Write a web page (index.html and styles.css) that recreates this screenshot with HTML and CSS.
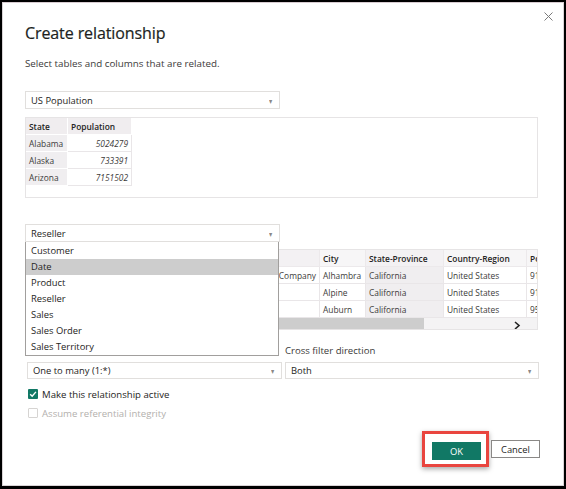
FILE: index.html
```html
<!DOCTYPE html>
<html>
<head>
<meta charset="utf-8">
<link rel="stylesheet" href="styles.css">
</head>
<body>
<div class="dialog">
  <button class="close" aria-label="Close">
    <svg width="9" height="9" viewBox="0 0 9 9"><path d="M0.5 0.5L8.5 8.5M8.5 0.5L0.5 8.5" stroke="#7a7a7a" stroke-width="1" fill="none"/></svg>
  </button>
  <h1 class="title">Create relationship</h1>
  <p class="subtitle">Select tables and columns that are related.</p>

  <div class="select wide">
    <span>US Population</span><span class="arrow">▾</span>
  </div>
  <div class="preview">
    <table class="grid small">
      <colgroup><col style="width:42px"><col style="width:64px"></colgroup>
      <thead><tr><th class="sel">State</th><th>Population</th></tr></thead>
      <tbody>
        <tr><td class="sel">Alabama</td><td class="num">5024279</td></tr>
        <tr><td class="sel">Alaska</td><td class="num">733391</td></tr>
        <tr><td class="sel">Arizona</td><td class="num">7151502</td></tr>
      </tbody>
    </table>
  </div>

  <div class="select-wrap">
    <div class="select wide open">
      <span>Reseller</span><span class="arrow">▾</span>
    </div>
    <ul class="menu">
      <li>Customer</li>
      <li class="hover">Date</li>
      <li>Product</li>
      <li>Reseller</li>
      <li>Sales</li>
      <li>Sales Order</li>
      <li>Sales Territory</li>
    </ul>
  </div>
  <div class="preview second">
    <table class="grid big">
      <colgroup><col style="width:110px"><col style="width:184px"><col style="width:46px"><col style="width:78px"><col style="width:83px"><col style="width:70px"></colgroup>
      <thead><tr><th>Business Type</th><th>Reseller</th><th class="light">City</th><th>State-Province</th><th class="light">Country-Region</th><th class="light">Postal Code</th></tr></thead>
      <tbody>
        <tr><td>Specialty Bike Shop</td><td class="rt">Sports Company</td><td>Alhambra</td><td class="sel">California</td><td>United States</td><td>91801</td></tr>
        <tr><td>Warehouse</td><td></td><td>Alpine</td><td class="sel">California</td><td>United States</td><td>91901</td></tr>
        <tr><td>Value Added Reseller</td><td></td><td>Auburn</td><td class="sel">California</td><td>United States</td><td>95603</td></tr>
      </tbody>
    </table>
    <div class="hscroll"><div class="thumb"></div><span class="chev">
      <svg width="8" height="9" viewBox="0 0 8 9"><path d="M2 1L6 4.5L2 8" stroke="#222" stroke-width="1.6" fill="none"/></svg>
    </span></div>
  </div>

  <div class="options">
    <div class="field">
      <label class="lbl">Cardinality</label>
      <div class="select"><span>One to many (1:*)</span><span class="arrow">▾</span></div>
    </div>
    <div class="field">
      <label class="lbl">Cross filter direction</label>
      <div class="select"><span>Both</span><span class="arrow">▾</span></div>
    </div>
  </div>

  <div class="checks">
    <div class="check on"><span class="box"><svg width="10" height="10" viewBox="0 0 10 10"><path d="M2.2 5.2L4.2 7.2L7.9 2.9" stroke="#fff" stroke-width="1.4" fill="none"/></svg></span>Make this relationship active</div>
    <div class="check off"><span class="box"></span>Assume referential integrity</div>
  </div>

  <div class="actions">
    <div class="highlight"><button class="btn primary">OK</button></div>
    <button class="btn">Cancel</button>
  </div>
</div>
</body>
</html>
```

FILE: styles.css
```css
* { box-sizing: border-box; }
html, body { margin: 0; padding: 0; }
body {
  background: #000;
  width: 566px;
  height: 489px;
  overflow: hidden;
  font-family: "Open Sans", "Noto Sans", sans-serif;
  color: #252423;
}
.dialog {
  position: relative;
  margin: 2px 0 0 2px;
  width: 562px;
  height: 484px;
  background: #fff;
  border: 1px solid #d9d4d6;
  border-top-color: #d8ccd1;
  padding: 0 0 0 22px;
}
.close {
  position: absolute;
  right: 10px;
  top: 9px;
  border: 0;
  background: none;
  padding: 0;
  width: 9px;
  height: 9px;
  display: block;
}
.close svg { display: block; }
.title {
  margin: 0;
  padding-top: 18px;
  font-size: 16px;
  line-height: 24px;
  font-weight: 400;
  color: #201f1e;
  letter-spacing: -0.1px;
  -webkit-text-stroke: 0.2px #201f1e;
}
.subtitle {
  margin: 12px 0 0;
  font-size: 9.8px;
  line-height: 14px;
  color: #3b3a39;
}
.select {
  height: 18px;
  border: 1px solid #e1dfdd;
  display: flex;
  align-items: center;
  justify-content: space-between;
  padding: 0 6px 0 5px;
  font-size: 9.4px;
  color: #252423;
  background: #fff;
}
.select .arrow {
  font-size: 8px;
  color: #8a8886;
  transform: scaleX(0.8);
}
.select.wide { width: 255px; margin-top: 20px; }
.preview {
  margin-top: 8px;
  width: 513px;
  height: 81px;
  border: 1px solid #e6e4e5;
  overflow: hidden;
  position: relative;
}
.preview.second { margin-top: 7px; }
.select-wrap { position: relative; width: 255px; margin-top: 26px; z-index: 5; }
.select-wrap .select.wide { margin-top: 0; }
.menu {
  position: absolute;
  left: 0;
  top: 18px;
  width: 254px;
  margin: 0;
  padding: 1px 0 0;
  list-style: none;
  background: #fff;
  border: 1px solid #a19f9d;
  border-top: 0;
  font-size: 9.4px;
}
.menu li {
  height: 16px;
  line-height: 16px;
  padding-left: 5px;
  color: #252423;
}
.menu li.hover { background: #cdcdcd; }
.grid {
  border-collapse: collapse;
  table-layout: fixed;
  font-size: 8.4px;
  color: #3b3a39;
}
.grid th, .grid td {
  height: 17px;
  padding: 0 3px;
  border: 1px solid #e9e6e8;
  white-space: nowrap;
  overflow: hidden;
  text-align: left;
}
.grid th {
  font-weight: 600;
  background: #f0edef;
  color: #252423;
  border-color: #fff;
}
.grid.small { margin: -1px 0 0 -1px; }
.grid.small td.sel { background: #f0eef0; border-color: #fff; }
.grid td.num { text-align: right; font-style: italic; }
.grid.big { margin: -1px 0 0 -1px; width: 571px; }
.grid.big th { background: #f3f1f3; border-color: #ece9eb; }
.grid.big th.light { background: #f7f6f7; }
.grid.big td { background: #fff; }
.grid.big td.sel { background: #f0eef0; }
.grid.big td.rt { text-align: right; }
.hscroll {
  height: 14px;
  background: #f4f3f4;
  position: relative;
}
.hscroll .thumb {
  width: 398px;
  height: 14px;
  background: #cdcdcd;
}
.hscroll .chev {
  position: absolute;
  left: 487px;
  top: 3px;
}
.hscroll .chev svg { display: block; }
.options {
  display: flex;
  gap: 3px;
  margin-top: 15px;
  padding-left: 2px;
}
.field { width: 255px; }
.field .lbl {
  display: block;
  font-size: 9.6px;
  line-height: 12px;
  color: #3b3a39;
  margin-bottom: 5px;
}
.field .select { width: 255px; height: 17px; }
.field + .field .select { width: 254px; }
.checks { margin-top: 10px; padding-left: 3px; }
.check {
  display: flex;
  align-items: center;
  height: 10px;
  font-size: 9.6px;
  color: #252423;
  margin-bottom: 9px;
}
.check .box {
  width: 10px;
  height: 10px;
  margin-right: 4px;
  border-radius: 1px;
  flex: none;
}
.check .box svg { display: block; }
.check.on .box { background: #117865; }
.check.off { color: #b3b0ad; }
.check.off .box { border: 1px solid #d6d4d2; }
.actions {
  display: flex;
  justify-content: flex-end;
  align-items: center;
  gap: 2px;
  margin-top: 13px;
  padding-right: 23px;
}
.highlight {
  border: 3px solid #e9453f;
  padding: 8px 5px 4px 7px;
  box-shadow: 0 2px 5px rgba(0,0,0,0.35);
}
.btn {
  display: block;
  width: 49px;
  height: 18px;
  border: 1px solid #8a8886;
  background: #fff;
  font-family: inherit;
  font-size: 9.4px;
  color: #252423;
  padding: 0;
}
.btn.primary {
  background: #117865;
  border-color: #117865;
  color: #fff;
}
```
